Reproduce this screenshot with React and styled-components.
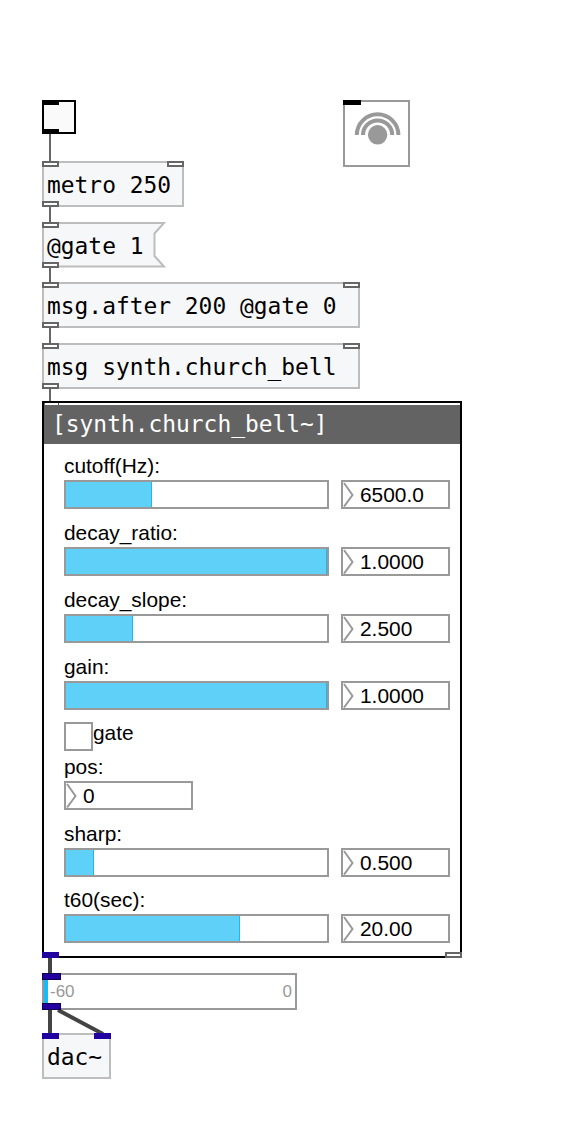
import React from "react";
import styled, { createGlobalStyle } from "styled-components";

const Global = createGlobalStyle`
  * { box-sizing: border-box; }
  body { margin: 0; background: #fff; }
`;

const mono = `"DejaVu Sans Mono", monospace`;
const sans = `"Liberation Sans", Arial, sans-serif`;

const Canvas = styled.main`
  position: relative;
  width: 588px;
  height: 1138px;
  overflow: hidden;
  background: #fff;
`;

const Wires = styled.svg`
  position: absolute;
  inset: 0;
`;

/* A node at its place on the patch canvas; its grid stacks inlets, content and outlets */
const Node = styled.div`
  position: absolute;
  left: ${(p) => p.$x}px;
  top: ${(p) => p.$y}px;
  width: ${(p) => p.$w}px;
  height: ${(p) => p.$h}px;
  display: grid;
`;

const Frame = styled.div`
  grid-area: 1 / 1;
  display: flex;
  align-items: center;
  border: 2px solid ${(p) => p.$line || "#999"};
  background: ${(p) => p.$fill || "#fff"};
`;

const ObjectText = styled(Frame)`
  padding: 2px 0 0 3px;
  color: #000;
  font: 22.9px/28px ${mono};
  white-space: pre;
`;

const MessageText = styled(ObjectText)`
  z-index: 1;
  border-color: transparent;
  background: transparent;
`;

const MessageShape = styled.svg`
  grid-area: 1 / 1;
`;

/* Inlets along the top edge and outlets along the bottom edge */
const Ports = styled.div`
  grid-area: 1 / 1;
  z-index: 3;
  align-self: ${(p) => (p.$out ? "end" : "start")};
  display: flex;
  justify-content: space-between;
`;

const Port = styled.i`
  width: 17px;
  height: 6px;
  border: 2px solid #666;
  background: #fff;
`;

const BlackPort = styled.i`
  width: ${(p) => p.$w || 17}px;
  height: 5px;
  background: #000;
`;

const SignalPort = styled.i`
  width: ${(p) => (p.$edge ? 19 : 17)}px;
  height: ${(p) => (p.$edge ? 7 : 6)}px;
  border: ${(p) => (p.$edge ? "1px solid #10004e" : "0")};
  background: #2300a0;
`;

const Panel = styled.div`
  grid-area: 1 / 1;
  display: flex;
  flex-direction: column;
  border: 2px solid #000;
  padding-top: 2px;
  background: #fff;
`;

const PanelTitle = styled.header`
  flex: none;
  height: 39px;
  padding-left: 8px;
  background: #636363;
  color: #fff;
  font: 22.9px/39px ${mono};
  white-space: pre;
`;

const PanelBody = styled.div`
  display: flex;
  flex-direction: column;
  padding: 6px 0 0 20px;
  font: 20.9px/24px ${sans};
  color: #000;
`;

const Field = styled.section`
  margin-bottom: ${(p) => p.$gap ?? 8}px;
`;

const FieldLabel = styled.div`
  height: 30px;
  padding-top: 4px;
`;

const Controls = styled.div`
  display: flex;
  gap: 12px;
`;

const Slider = styled.div`
  flex: none;
  width: 265px;
  height: 29px;
  border: 2px solid #999;
  background: #fff;
`;

const SliderFill = styled.div`
  width: ${(p) => p.$w}px;
  height: 100%;
  background: #5fd1f8;
  border-right: 1px solid #1bb9ed;
`;

const NumberBox = styled.div`
  flex: none;
  display: flex;
  align-items: center;
  width: ${(p) => p.$w || 109}px;
  height: 29px;
  border: 2px solid #999;
  background: #fff;
`;

const Arrow = styled.svg`
  flex: none;
  width: 17px;
  height: 25px;
`;

const GateRow = styled.div`
  display: flex;
  height: 29px;
  margin-top: 12px;
  line-height: 21px;
`;

const Check = styled.span`
  width: 29px;
  height: 29px;
  border: 2px solid #999;
`;

const Meter = styled(Frame)`
  justify-content: space-between;
  padding: 0 3px 0 6px;
  background: linear-gradient(90deg, #17bcf5 4px, #fff 4px);
  color: #999;
  font: 17px/20px ${sans};
`;

function Num({ value, width }) {
  return (
    <NumberBox $w={width}>
      <Arrow viewBox="0 0 17 25" fill="none" stroke="#999" strokeWidth="2">
        <path d="M1 1 9.5 13 1 24.5" />
      </Arrow>
      <span>{value}</span>
    </NumberBox>
  );
}

function Param({ name, fill, value, gap }) {
  return (
    <Field $gap={gap}>
      <FieldLabel>{name}:</FieldLabel>
      <Controls>
        <Slider>
          <SliderFill $w={fill} />
        </Slider>
        <Num value={value} />
      </Controls>
    </Field>
  );
}

function ObjectNode({ y, w, children }) {
  return (
    <Node $x={42} $y={y} $w={w} $h={46}>
      <ObjectText $line="#bdbdbd" $fill="#f6f7f9">{children}</ObjectText>
      <Ports>
        <Port />
        <Port />
      </Ports>
      <Ports $out>
        <Port />
      </Ports>
    </Node>
  );
}

export default function App() {
  return (
    <Canvas>
      <Global />

      <Node $x={42} $y={100} $w={34} $h={34}>
        <Frame $line="#000" $fill="#fafafa" />
        <Ports><BlackPort /></Ports>
        <Ports $out><BlackPort /></Ports>
      </Node>

      <Node $x={343} $y={100} $w={67} $h={67}>
        <Frame>
          <svg width="63" height="63" fill="none" stroke="#999" strokeWidth="4">
            <circle cx="32.6" cy="32.8" r="9.7" fill="#999" stroke="none" />
            <path d="M11.8 33a20.8 20.8 0 0 1 41.6 0M18 33a14.6 14.6 0 0 1 29.2 0" />
          </svg>
        </Frame>
        <Ports><BlackPort $w={18} /></Ports>
      </Node>

      <ObjectNode y={161} w={142}>metro 250</ObjectNode>

      <Node $x={42} $y={222} $w={124} $h={46}>
        <MessageShape width="124" height="46">
          <path
            d="M1 1H122L112.5 11.5V34L122 44.5H1Z"
            fill="#f6f7f9"
            stroke="#bdbdbd"
            strokeWidth="2"
          />
        </MessageShape>
        <MessageText>@gate 1</MessageText>
        <Ports><Port /></Ports>
        <Ports $out><Port /></Ports>
      </Node>

      <ObjectNode y={282} w={318}>msg.after 200 @gate 0</ObjectNode>
      <ObjectNode y={343} w={318}>msg synth.church_bell</ObjectNode>

      <Node $x={42} $y={401} $w={420} $h={557}>
        <Panel>
          <PanelTitle>[synth.church_bell~]</PanelTitle>
          <PanelBody>
            <Param name="cutoff(Hz)" fill={86} value="6500.0" />
            <Param name="decay_ratio" fill={261} value="1.0000" />
            <Param name="decay_slope" fill={67} value="2.500" />
            <Param name="gain" fill={261} value="1.0000" gap={0} />
            <GateRow>
              <Check />
              <span>gate</span>
            </GateRow>
            <Field>
              <FieldLabel>pos:</FieldLabel>
              <Num value="0" width={129} />
            </Field>
            <Param name="sharp" fill={28} value="0.500" gap={7} />
            <Param name="t60(sec)" fill={174} value="20.00" gap={0} />
          </PanelBody>
        </Panel>
        <Ports $out>
          <SignalPort />
          <Port />
        </Ports>
      </Node>

      <Node $x={42} $y={973} $w={255} $h={37}>
        <Meter>
          <span>-60</span>
          <span>0</span>
        </Meter>
        <Ports><SignalPort $edge /></Ports>
        <Ports $out><SignalPort $edge /></Ports>
      </Node>

      <Node $x={42} $y={1033} $w={69} $h={46}>
        <ObjectText $line="#bdbdbd" $fill="#f6f7f9">dac~</ObjectText>
        <Ports>
          <SignalPort />
          <SignalPort />
        </Ports>
      </Node>

      <Wires width="588" height="1138" fill="none" stroke="#666" strokeWidth="2">
        <path d="M50 134V161M50 207V222M50 268V282M50 328V343M50 389V401" />
        <path d="M44.5 403V406M58.5 403V405" strokeWidth="1" />
        <path d="M461 952V958" stroke="#000" />
        <path d="M50 958V973M50 1010V1033M58 1010 103 1034" stroke="#444" strokeWidth="4" />
      </Wires>
    </Canvas>
  );
}
